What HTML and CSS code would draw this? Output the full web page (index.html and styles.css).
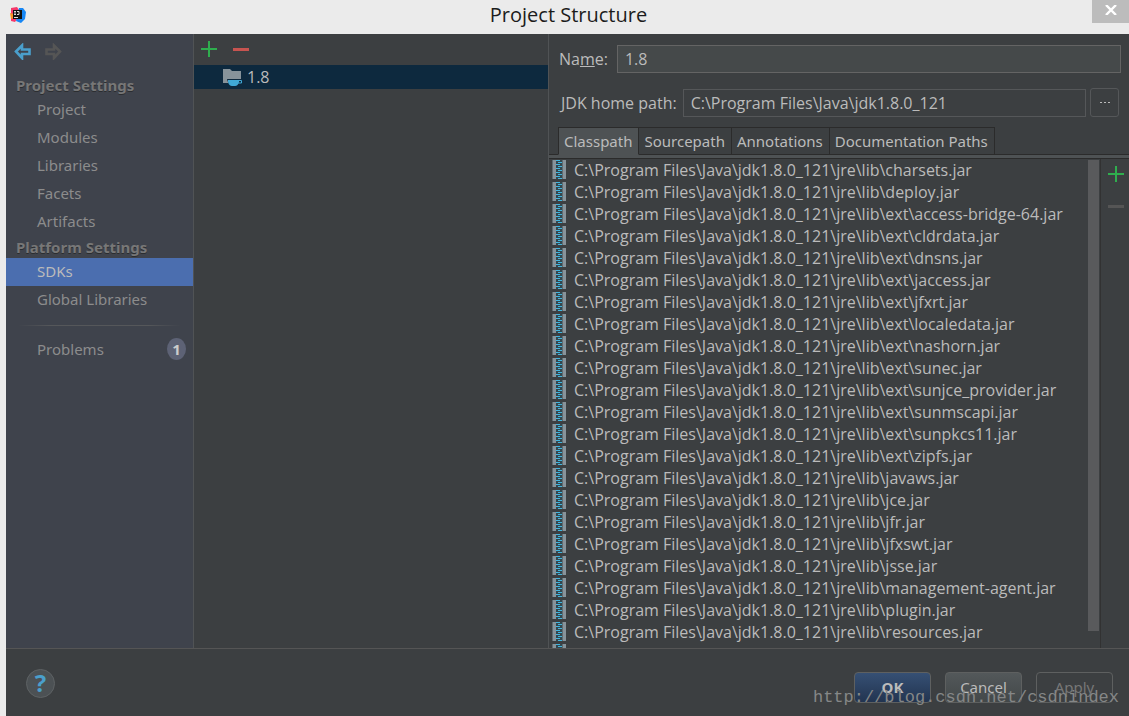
FILE: index.html
```html
<!DOCTYPE html>
<html lang="en">
<head>
<meta charset="utf-8">
<title>Project Structure</title>
<link rel="stylesheet" href="styles.css">
</head>
<body>
<svg class="defs" aria-hidden="true">
  <symbol id="jar" viewBox="0 0 14 19">
    <path d="M0 0h14v19H0z" fill="#5f6b70"/>
    <path d="M1 0h3v19H1zM11 0h3v19h-3z" fill="#87939a"/>
    <path d="M4 0h6v19H4z" fill="#33474f"/>
    <path d="M4 .5h4M6 2.500h4M4 4.500h4M6 6.500h4M4 8.500h4M6 10.500h4M4 12.500h4M6 14.500h4M4 16.500h4M6 18.500h4" stroke="#40b6e0"/>
  </symbol>
  <symbol id="plus" viewBox="0 0 16 16"><path d="M0 8h16M8 0v16" stroke="#2fae4e" stroke-width="2"/></symbol>
  <symbol id="minus" viewBox="0 0 16 16"><path d="M0 8.500h16" stroke="currentColor" stroke-width="3"/></symbol>
  <symbol id="arrow" viewBox="0 0 17 17"><path d="M2 8.500L8 2.500v4h7.500v4.500H8v4z" fill="none" stroke="currentColor" stroke-width="2.600"/></symbol>
</svg>
<div class="window">
  <header class="titlebar">
    <svg class="logo" viewBox="0 0 16 16" aria-hidden="true">
      <path d="M1 1l6-1 4 6-6 9-4-1z" fill="#f5386b"/><path d="M0 6l4 1v4l-3 1z" fill="#fb9222"/>
      <path d="M9 1l4 0 3 4-1 7-4 4-5-2z" fill="#1787f5"/><path d="M3 3h9v9H3z" fill="#111"/>
      <path d="M4 4.500h2M5 4.500v3M4 7.500h2M7 4.500h2v3H7M4 10.500h4" fill="none" stroke="#ddd"/>
    </svg>
    <h1 class="title">Project Structure</h1>
    <button class="close" aria-label="Close"><svg viewBox="0 0 12 10"><path d="M1 0l10 10M11 0L1 10" stroke="#fff" stroke-width="2.400"/></svg></button>
  </header>
  <main class="content">
    <nav class="sidebar">
      <div class="history">
        <button class="tool back" aria-label="Back"><svg><use href="#arrow"/></svg></button>
        <button class="tool forward" aria-label="Forward" disabled><svg><use href="#arrow"/></svg></button>
      </div>
      <h2 class="group">Project Settings</h2>
      <a class="item" href="#">Project</a>
      <a class="item" href="#">Modules</a>
      <a class="item" href="#">Libraries</a>
      <a class="item" href="#">Facets</a>
      <a class="item" href="#">Artifacts</a>
      <h2 class="group">Platform Settings</h2>
      <a class="item selected" href="#">SDKs</a>
      <a class="item" href="#">Global Libraries</a>
      <hr class="rule">
      <a class="item" href="#">Problems<span class="count">1</span></a>
    </nav>
    <section class="sdks">
      <div class="sdk-tools">
        <button class="tool" aria-label="Add SDK"><svg><use href="#plus"/></svg></button>
        <button class="tool remove" aria-label="Remove SDK"><svg><use href="#minus"/></svg></button>
      </div>
      <div class="sdk"><svg class="folder" viewBox="0 0 20 18" aria-hidden="true"><path d="M0 1h7l2 2h9v12H0z" fill="#87939a"/><path d="M4 11h16v4h-3l-2 3H8q-3-2-4-7z" fill="#0d293e"/><path d="M5 12h11v2q-1 4-4 4h-3q-3 0-4-4z" fill="#40a9d6"/><path d="M15 12.500h3.500v2.500H15" fill="none" stroke="#40a9d6"/></svg>1.8</div>
    </section>
    <section class="details">
      <div class="field name-field"><label for="name">Na<u>m</u>e:</label><input id="name" class="text editable" value="1.8"></div>
      <div class="field home-field"><label for="home">JDK home path:</label><input id="home" class="text" value="C:\Program Files\Java\jdk1.8.0_121" readonly><button class="browse" aria-label="Browse"><svg viewBox="0 0 10 2"><path d="M0 0h2v1H0zM4 0h2v1H4zM8 0h2v1H8z" fill="#bbb"/></svg></button></div>
      <div class="tabs" role="tablist">
        <button class="tab active" role="tab">Classpath</button><button class="tab" role="tab">Sourcepath</button><button class="tab" role="tab">Annotations</button><button class="tab" role="tab">Documentation Paths</button>
      </div>
      <div class="paths">
        <ul class="jars">
          <li><svg><use href="#jar"/></svg>C:\Program Files\Java\jdk1.8.0_121\jre\lib\charsets.jar</li>
          <li><svg><use href="#jar"/></svg>C:\Program Files\Java\jdk1.8.0_121\jre\lib\deploy.jar</li>
          <li><svg><use href="#jar"/></svg>C:\Program Files\Java\jdk1.8.0_121\jre\lib\ext\access-bridge-64.jar</li>
          <li><svg><use href="#jar"/></svg>C:\Program Files\Java\jdk1.8.0_121\jre\lib\ext\cldrdata.jar</li>
          <li><svg><use href="#jar"/></svg>C:\Program Files\Java\jdk1.8.0_121\jre\lib\ext\dnsns.jar</li>
          <li><svg><use href="#jar"/></svg>C:\Program Files\Java\jdk1.8.0_121\jre\lib\ext\jaccess.jar</li>
          <li><svg><use href="#jar"/></svg>C:\Program Files\Java\jdk1.8.0_121\jre\lib\ext\jfxrt.jar</li>
          <li><svg><use href="#jar"/></svg>C:\Program Files\Java\jdk1.8.0_121\jre\lib\ext\localedata.jar</li>
          <li><svg><use href="#jar"/></svg>C:\Program Files\Java\jdk1.8.0_121\jre\lib\ext\nashorn.jar</li>
          <li><svg><use href="#jar"/></svg>C:\Program Files\Java\jdk1.8.0_121\jre\lib\ext\sunec.jar</li>
          <li><svg><use href="#jar"/></svg>C:\Program Files\Java\jdk1.8.0_121\jre\lib\ext\sunjce_provider.jar</li>
          <li><svg><use href="#jar"/></svg>C:\Program Files\Java\jdk1.8.0_121\jre\lib\ext\sunmscapi.jar</li>
          <li><svg><use href="#jar"/></svg>C:\Program Files\Java\jdk1.8.0_121\jre\lib\ext\sunpkcs11.jar</li>
          <li><svg><use href="#jar"/></svg>C:\Program Files\Java\jdk1.8.0_121\jre\lib\ext\zipfs.jar</li>
          <li><svg><use href="#jar"/></svg>C:\Program Files\Java\jdk1.8.0_121\jre\lib\javaws.jar</li>
          <li><svg><use href="#jar"/></svg>C:\Program Files\Java\jdk1.8.0_121\jre\lib\jce.jar</li>
          <li><svg><use href="#jar"/></svg>C:\Program Files\Java\jdk1.8.0_121\jre\lib\jfr.jar</li>
          <li><svg><use href="#jar"/></svg>C:\Program Files\Java\jdk1.8.0_121\jre\lib\jfxswt.jar</li>
          <li><svg><use href="#jar"/></svg>C:\Program Files\Java\jdk1.8.0_121\jre\lib\jsse.jar</li>
          <li><svg><use href="#jar"/></svg>C:\Program Files\Java\jdk1.8.0_121\jre\lib\management-agent.jar</li>
          <li><svg><use href="#jar"/></svg>C:\Program Files\Java\jdk1.8.0_121\jre\lib\plugin.jar</li>
          <li><svg><use href="#jar"/></svg>C:\Program Files\Java\jdk1.8.0_121\jre\lib\resources.jar</li>
          <li><svg><use href="#jar"/></svg></li>
        </ul>
        <div class="scrollbar"><div class="thumb"></div></div>
        <div class="path-tools">
          <button class="tool" aria-label="Add path"><svg><use href="#plus"/></svg></button>
          <button class="tool" aria-label="Remove path" disabled><svg><use href="#minus"/></svg></button>
        </div>
      </div>
    </section>
  </main>
  <footer class="footer">
    <button class="help" aria-label="Help">?</button>
    <button class="action primary">OK</button>
    <button class="action">Cancel</button>
    <button class="action" disabled>Apply</button>
    <span class="watermark">http://blog.csdn.net/csdnindex</span>
  </footer>
</div>
</body>
</html>
```

FILE: styles.css
```css
* { box-sizing: border-box; }
body { margin: 0; background: #ebebeb; color: #bbb; font: 16px/22px "Open Sans", "Noto Sans", sans-serif; }
button, input { font: inherit; color: inherit; margin: 0; }
button { padding: 0; }
.defs { position: absolute; width: 0; height: 0; }
.window { display: flex; flex-direction: column; height: 100vh; }

.titlebar { display: grid; grid-template-columns: 45px 1fr 37px; height: 34px; flex: none; }
.logo { width: 16px; height: 16px; margin: 7px 0 0 10px; }
.title { margin: 0; text-align: center; font-size: 20px; font-weight: 400; line-height: 30px; color: #1c1c1c; }
.close { height: 23px; border: 0; background: #bcbcbc; }
.close svg { width: 12px; height: 10px; display: block; margin: -3px auto 0; }

.content { display: grid; grid-template-columns: 188px 355px 1fr; flex: 1; min-height: 0; margin-left: 6px; background: #3c3f41; }
.tool { border: 0; background: none; display: block; width: 16px; height: 16px; color: #555; }
.tool svg { display: block; width: 100%; height: 100%; }

.sidebar { background: #3f434c; border-right: 1px solid #505355; font-family: "Noto Sans", sans-serif; font-size: 15px; }
.history { display: flex; gap: 14px; height: 40px; padding: 9px 0 0 8px; }
.history .tool { width: 17px; height: 17px; }
.history .back { color: #4a9fcc; }
.forward { transform: scaleX(-1); }
.group { margin: 0; padding-left: 10px; font-size: 15px; font-weight: 700; line-height: 22px; color: #777; text-shadow: 0 1px #2b2d30; }
.item { display: flex; align-items: center; justify-content: space-between; height: 28px; padding: 0 7px 2px 31px; color: #8c8c8c; text-decoration: none; }
.selected { background: #4b6eaf; color: #bbb; }
.rule { margin: 11px 12px 10px; height: 1px; border: 0; background: linear-gradient(90deg, #3f434c, #55575a 20%, #55575a 80%, #3f434c); }
.count { width: 19px; height: 22px; border-radius: 50%; background: #5d6275; color: #ccc; font-weight: 700; text-align: center; }

.sdks { border-right: 1px solid #505355; }
.sdk-tools { display: flex; gap: 16px; height: 31px; padding: 7px; }
.sdk-tools .remove { color: #c75450; }
.sdk { display: flex; align-items: center; gap: 4px; height: 24px; padding-left: 29px; background: #0d293e; }
.folder { width: 20px; height: 18px; }

.details { display: flex; flex-direction: column; min-width: 0; min-height: 0; }
.field { display: flex; align-items: center; }
.name-field { padding: 11px 8px 0 10px; gap: 9px; }
.home-field { padding: 15px 10px 0 12px; gap: 6px; }
.text { flex: 1; min-width: 0; height: 28px; padding: 0 7px; border: 1px solid #555759; background: #3c3f41; outline: 0; }
.editable { background: #45494a; border-color: #646464; }
.browse { width: 29px; height: 29px; margin-left: -2px; border: 1px solid #555759; border-radius: 3px; background: none; }
.browse svg { display: block; width: 10px; height: 2px; margin: auto; }
.tabs { display: flex; margin-top: 10px; height: 32px; padding-left: 9px; border-bottom: 1px solid #2b2b2b; background: linear-gradient(#0000 27px, #2b2b2b 27px, #2b2b2b 28px, #4e5254 28px); font-family: "Noto Sans", sans-serif; font-size: 15px; }
.tab { height: 28px; padding: 0 6px 0 5px; border: 1px solid #2b2b2b; border-left-width: 0; background: #3c3f41; white-space: nowrap; }
.tab.active { border-left-width: 1px; border-bottom-color: #4e5254; background: #4e5254; }
.paths { display: flex; flex: 1; min-height: 0; overflow: hidden; }
.jars { flex: 1; margin: 0; padding: 0; list-style: none; min-width: 0; }
.jars li { display: flex; align-items: center; gap: 8px; height: 22px; padding-left: 3px; white-space: nowrap; }
.jars svg { width: 14px; height: 19px; margin-bottom: 1px; flex: none; }
.scrollbar { width: 13px; padding: 1px 1px 17px 0; border-right: 1px solid #323232; }
.thumb { height: 100%; background: #595a5c; }
.path-tools { display: flex; flex-direction: column; gap: 16px; width: 28px; padding: 7px 0 0 7px; }

.footer { position: relative; display: flex; align-items: center; gap: 14px; flex: none; height: 68px; margin-left: 6px; padding: 9px 16px 0 20px; border-top: 1px solid #555; background: #3c3f41; }
.help { width: 29px; height: 29px; margin-right: auto; margin-bottom: 8px; border: 1px solid #5e6264; border-radius: 50%; background: #4c5154; color: #4a9fcc; font-size: 24px; font-weight: 700; line-height: 26px; }
.action { width: 77px; height: 31px; border: 1px solid #5e6060; border-radius: 4px; background: linear-gradient(#53585a, #434849); font-family: "Noto Sans", sans-serif; font-size: 15px; }
.action:disabled { background: none; color: #777; }
.action.primary { background: linear-gradient(#365074, #223450); font-weight: 700; }
.watermark { position: absolute; right: 10px; bottom: 7px; font: 17px/22px "Liberation Mono", monospace; color: #858787; pointer-events: none; }
```
